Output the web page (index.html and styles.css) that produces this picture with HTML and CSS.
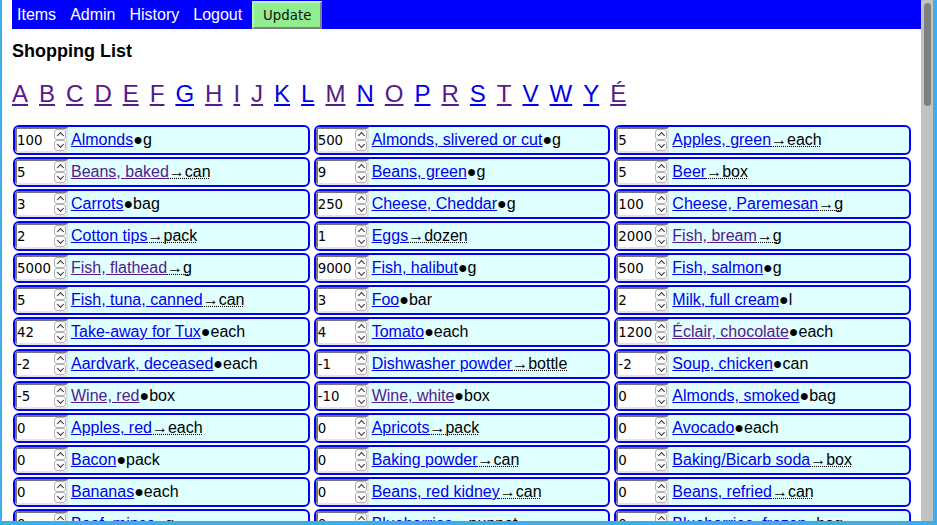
FILE: index.html
```html
<!DOCTYPE html>
<html lang="en">
<head>
<meta charset="utf-8">
<title>Shopping List</title>
<link rel="stylesheet" href="styles.css">
</head>
<body>
<div class="window">
  <div class="page">
    <nav class="nav">
      <a href="#" class="nav-link">Items</a>
      <a href="#" class="nav-link">Admin</a>
      <a href="#" class="nav-link">History</a>
      <a href="#" class="nav-link">Logout</a>
      <button class="update" type="button">Update</button>
    </nav>
    <h1 class="title">Shopping List</h1>
    <div class="letters">
      <a href="#" class="v">A</a><a href="#" class="v">B</a><a href="#" class="v">C</a><a href="#" class="v">D</a><a href="#" class="v">E</a><a href="#" class="v">F</a><a href="#">G</a><a href="#" class="v">H</a><a href="#" class="v">I</a><a href="#" class="v">J</a><a href="#">K</a><a href="#">L</a><a href="#" class="v">M</a><a href="#">N</a><a href="#" class="v">O</a><a href="#">P</a><a href="#" class="v">R</a><a href="#">S</a><a href="#" class="v">T</a><a href="#">V</a><a href="#">W</a><a href="#">Y</a><a href="#" class="v">É</a>
    </div>
    <div class="grid">
      <div class="cell"><span class="qty"><input class="num" value="100"><span class="spin"><span class="btn up"></span><span class="btn down"></span></span></span><a href="#" class="item">Almonds</a><span class="unit">●g</span></div>
      <div class="cell"><span class="qty"><input class="num" value="500"><span class="spin"><span class="btn up"></span><span class="btn down"></span></span></span><a href="#" class="item">Almonds, slivered or cut</a><span class="unit">●g</span></div>
      <div class="cell"><span class="qty"><input class="num" value="5"><span class="spin"><span class="btn up"></span><span class="btn down"></span></span></span><a href="#" class="item">Apples, green</a><abbr class="unit" title="converted">→each</abbr></div>

      <div class="cell"><span class="qty"><input class="num" value="5"><span class="spin"><span class="btn up"></span><span class="btn down"></span></span></span><a href="#" class="item v">Beans, baked</a><abbr class="unit" title="converted">→can</abbr></div>
      <div class="cell"><span class="qty"><input class="num" value="9"><span class="spin"><span class="btn up"></span><span class="btn down"></span></span></span><a href="#" class="item">Beans, green</a><span class="unit">●g</span></div>
      <div class="cell"><span class="qty"><input class="num" value="5"><span class="spin"><span class="btn up"></span><span class="btn down"></span></span></span><a href="#" class="item">Beer</a><abbr class="unit" title="converted">→box</abbr></div>

      <div class="cell"><span class="qty"><input class="num" value="3"><span class="spin"><span class="btn up"></span><span class="btn down"></span></span></span><a href="#" class="item">Carrots</a><span class="unit">●bag</span></div>
      <div class="cell"><span class="qty"><input class="num" value="250"><span class="spin"><span class="btn up"></span><span class="btn down"></span></span></span><a href="#" class="item">Cheese, Cheddar</a><span class="unit">●g</span></div>
      <div class="cell"><span class="qty"><input class="num" value="100"><span class="spin"><span class="btn up"></span><span class="btn down"></span></span></span><a href="#" class="item">Cheese, Paremesan</a><abbr class="unit" title="converted">→g</abbr></div>

      <div class="cell"><span class="qty"><input class="num" value="2"><span class="spin"><span class="btn up"></span><span class="btn down"></span></span></span><a href="#" class="item">Cotton tips</a><abbr class="unit" title="converted">→pack</abbr></div>
      <div class="cell"><span class="qty"><input class="num" value="1"><span class="spin"><span class="btn up"></span><span class="btn down"></span></span></span><a href="#" class="item">Eggs</a><abbr class="unit" title="converted">→dozen</abbr></div>
      <div class="cell"><span class="qty"><input class="num" value="2000"><span class="spin"><span class="btn up"></span><span class="btn down"></span></span></span><a href="#" class="item v">Fish, bream</a><abbr class="unit" title="converted">→g</abbr></div>

      <div class="cell"><span class="qty"><input class="num" value="5000"><span class="spin"><span class="btn up"></span><span class="btn down"></span></span></span><a href="#" class="item v">Fish, flathead</a><abbr class="unit" title="converted">→g</abbr></div>
      <div class="cell"><span class="qty"><input class="num" value="9000"><span class="spin"><span class="btn up"></span><span class="btn down"></span></span></span><a href="#" class="item">Fish, halibut</a><span class="unit">●g</span></div>
      <div class="cell"><span class="qty"><input class="num" value="500"><span class="spin"><span class="btn up"></span><span class="btn down"></span></span></span><a href="#" class="item">Fish, salmon</a><span class="unit">●g</span></div>

      <div class="cell"><span class="qty"><input class="num" value="5"><span class="spin"><span class="btn up"></span><span class="btn down"></span></span></span><a href="#" class="item">Fish, tuna, canned</a><abbr class="unit" title="converted">→can</abbr></div>
      <div class="cell"><span class="qty"><input class="num" value="3"><span class="spin"><span class="btn up"></span><span class="btn down"></span></span></span><a href="#" class="item">Foo</a><span class="unit">●bar</span></div>
      <div class="cell"><span class="qty"><input class="num" value="2"><span class="spin"><span class="btn up"></span><span class="btn down"></span></span></span><a href="#" class="item">Milk, full cream</a><span class="unit">●l</span></div>

      <div class="cell"><span class="qty"><input class="num" value="42"><span class="spin"><span class="btn up"></span><span class="btn down"></span></span></span><a href="#" class="item">Take-away for Tux</a><span class="unit">●each</span></div>
      <div class="cell"><span class="qty"><input class="num" value="4"><span class="spin"><span class="btn up"></span><span class="btn down"></span></span></span><a href="#" class="item">Tomato</a><span class="unit">●each</span></div>
      <div class="cell"><span class="qty"><input class="num" value="1200"><span class="spin"><span class="btn up"></span><span class="btn down"></span></span></span><a href="#" class="item v">Éclair, chocolate</a><span class="unit">●each</span></div>

      <div class="cell"><span class="qty"><input class="num" value="-2"><span class="spin"><span class="btn up"></span><span class="btn down"></span></span></span><a href="#" class="item">Aardvark, deceased</a><span class="unit">●each</span></div>
      <div class="cell"><span class="qty"><input class="num" value="-1"><span class="spin"><span class="btn up"></span><span class="btn down"></span></span></span><a href="#" class="item">Dishwasher powder</a><abbr class="unit" title="converted">→bottle</abbr></div>
      <div class="cell"><span class="qty"><input class="num" value="-2"><span class="spin"><span class="btn up"></span><span class="btn down"></span></span></span><a href="#" class="item">Soup, chicken</a><span class="unit">●can</span></div>

      <div class="cell"><span class="qty"><input class="num" value="-5"><span class="spin"><span class="btn up"></span><span class="btn down"></span></span></span><a href="#" class="item v">Wine, red</a><span class="unit">●box</span></div>
      <div class="cell"><span class="qty"><input class="num" value="-10"><span class="spin"><span class="btn up"></span><span class="btn down"></span></span></span><a href="#" class="item v">Wine, white</a><span class="unit">●box</span></div>
      <div class="cell"><span class="qty"><input class="num" value="0"><span class="spin"><span class="btn up"></span><span class="btn down"></span></span></span><a href="#" class="item">Almonds, smoked</a><span class="unit">●bag</span></div>

      <div class="cell"><span class="qty"><input class="num" value="0"><span class="spin"><span class="btn up"></span><span class="btn down"></span></span></span><a href="#" class="item">Apples, red</a><abbr class="unit" title="converted">→each</abbr></div>
      <div class="cell"><span class="qty"><input class="num" value="0"><span class="spin"><span class="btn up"></span><span class="btn down"></span></span></span><a href="#" class="item">Apricots</a><abbr class="unit" title="converted">→pack</abbr></div>
      <div class="cell"><span class="qty"><input class="num" value="0"><span class="spin"><span class="btn up"></span><span class="btn down"></span></span></span><a href="#" class="item">Avocado</a><span class="unit">●each</span></div>

      <div class="cell"><span class="qty"><input class="num" value="0"><span class="spin"><span class="btn up"></span><span class="btn down"></span></span></span><a href="#" class="item">Bacon</a><span class="unit">●pack</span></div>
      <div class="cell"><span class="qty"><input class="num" value="0"><span class="spin"><span class="btn up"></span><span class="btn down"></span></span></span><a href="#" class="item">Baking powder</a><abbr class="unit" title="converted">→can</abbr></div>
      <div class="cell"><span class="qty"><input class="num" value="0"><span class="spin"><span class="btn up"></span><span class="btn down"></span></span></span><a href="#" class="item">Baking/Bicarb soda</a><abbr class="unit" title="converted">→box</abbr></div>

      <div class="cell"><span class="qty"><input class="num" value="0"><span class="spin"><span class="btn up"></span><span class="btn down"></span></span></span><a href="#" class="item">Bananas</a><span class="unit">●each</span></div>
      <div class="cell"><span class="qty"><input class="num" value="0"><span class="spin"><span class="btn up"></span><span class="btn down"></span></span></span><a href="#" class="item">Beans, red kidney</a><abbr class="unit" title="converted">→can</abbr></div>
      <div class="cell"><span class="qty"><input class="num" value="0"><span class="spin"><span class="btn up"></span><span class="btn down"></span></span></span><a href="#" class="item">Beans, refried</a><abbr class="unit" title="converted">→can</abbr></div>

      <div class="cell"><span class="qty"><input class="num" value="0"><span class="spin"><span class="btn up"></span><span class="btn down"></span></span></span><a href="#" class="item">Beef, mince</a><span class="unit">●g</span></div>
      <div class="cell"><span class="qty"><input class="num" value="0"><span class="spin"><span class="btn up"></span><span class="btn down"></span></span></span><a href="#" class="item">Blueberries</a><abbr class="unit" title="converted">→punnet</abbr></div>
      <div class="cell"><span class="qty"><input class="num" value="0"><span class="spin"><span class="btn up"></span><span class="btn down"></span></span></span><a href="#" class="item">Blueberries, frozen</a><span class="unit">●bag</span></div>
    </div>
  </div>
  <div class="scrollbar"><div class="thumb"></div></div>
</div>
</body>
</html>
```

FILE: styles.css
```css
html, body {
  margin: 0;
  padding: 0;
  height: 525px;
  overflow: hidden;
  background: #ffffff;
  font-family: "Liberation Sans", Arial, sans-serif;
}

.window {
  display: flex;
  height: 525px;
  box-sizing: border-box;
  border-left: 2px solid #3daee9;
  border-right: 4px solid #3daee9;
  border-bottom: 4px solid #3daee9;
}

.page {
  flex: 1;
  min-width: 0;
  overflow: hidden;
  padding: 0 10px;
  background: #ffffff;
}

.scrollbar {
  width: 12px;
  flex: none;
  background: #c2c2c2;
  padding-top: 3px;
  box-sizing: border-box;
}

.thumb {
  width: 7px;
  height: 103px;
  margin-left: 3px;
  border-radius: 4px;
  background: #7f7f7f;
}

.nav {
  display: flex;
  align-items: stretch;
  height: 29px;
  margin-right: -10px;
  background: #0000ff;
  gap: 14px;
  padding-left: 5px;
}

.nav-link {
  color: #ffffff;
  text-decoration: none;
  font-size: 16px;
  line-height: 29px;
}

.update {
  margin: 1px 0 0 -4px;
  height: 28px;
  width: 70px;
  padding: 0;
  box-sizing: border-box;
  background: #90ee90;
  border: 2px solid;
  border-color: #b8f5b8 #808080 #808080 #b8f5b8;
  font-family: "DejaVu Sans", sans-serif;
  font-size: 13.33px;
  color: #111111;
}

.title {
  margin: 11px 0 0 0;
  font-size: 18px;
  line-height: 22px;
  font-weight: bold;
  color: #000000;
}

.letters {
  display: flex;
  gap: 11px;
  margin-top: 18px;
  font-size: 24px;
  line-height: 28px;
}

.letters a {
  color: #0000ee;
}

a.v,
.letters a.v {
  color: #551a8b;
}

.grid {
  display: grid;
  grid-template-columns: repeat(3, 1fr);
  column-gap: 4px;
  row-gap: 2px;
  margin: 17px 0 0 1px;
}

.cell {
  display: flex;
  align-items: center;
  height: 30px;
  box-sizing: border-box;
  border: 2px solid #0000ff;
  border-radius: 6px;
  background: #e0ffff;
  padding-left: 0;
  font-size: 16px;
  white-space: nowrap;
  overflow: hidden;
}

.qty {
  display: flex;
  flex: none;
  width: 53px;
  height: 26px;
  box-sizing: border-box;
  border: 2px solid;
  border-color: #767676 #e4e4e4 #e4e4e4 #767676;
  background: #ffffff;
  margin-right: 3px;
}

.num {
  flex: 1;
  min-width: 0;
  border: 0;
  padding: 0;
  margin: 0;
  font-family: "DejaVu Sans", sans-serif;
  font-size: 13.33px;
  color: #000000;
  background: transparent;
  outline: none;
}

.spin {
  display: flex;
  flex-direction: column;
  width: 12px;
  flex: none;
}

.btn {
  position: relative;
  flex: 1;
  box-sizing: border-box;
  border: 1px solid #b4b4b4;
  border-radius: 3px;
  background: #fbfbfb;
}

.btn::before {
  content: "";
  position: absolute;
  left: 3px;
  width: 4px;
  height: 4px;
  border-left: 1px solid #333333;
  border-top: 1px solid #333333;
}

.up::before {
  top: 3px;
  transform: rotate(45deg);
}

.down::before {
  top: 1px;
  transform: rotate(-135deg);
}

.item {
  color: #0000ee;
}

.unit {
  color: #000000;
  text-decoration: none;
}

abbr.unit {
  text-decoration: underline dotted;
  text-decoration-thickness: 1px;
}
```
